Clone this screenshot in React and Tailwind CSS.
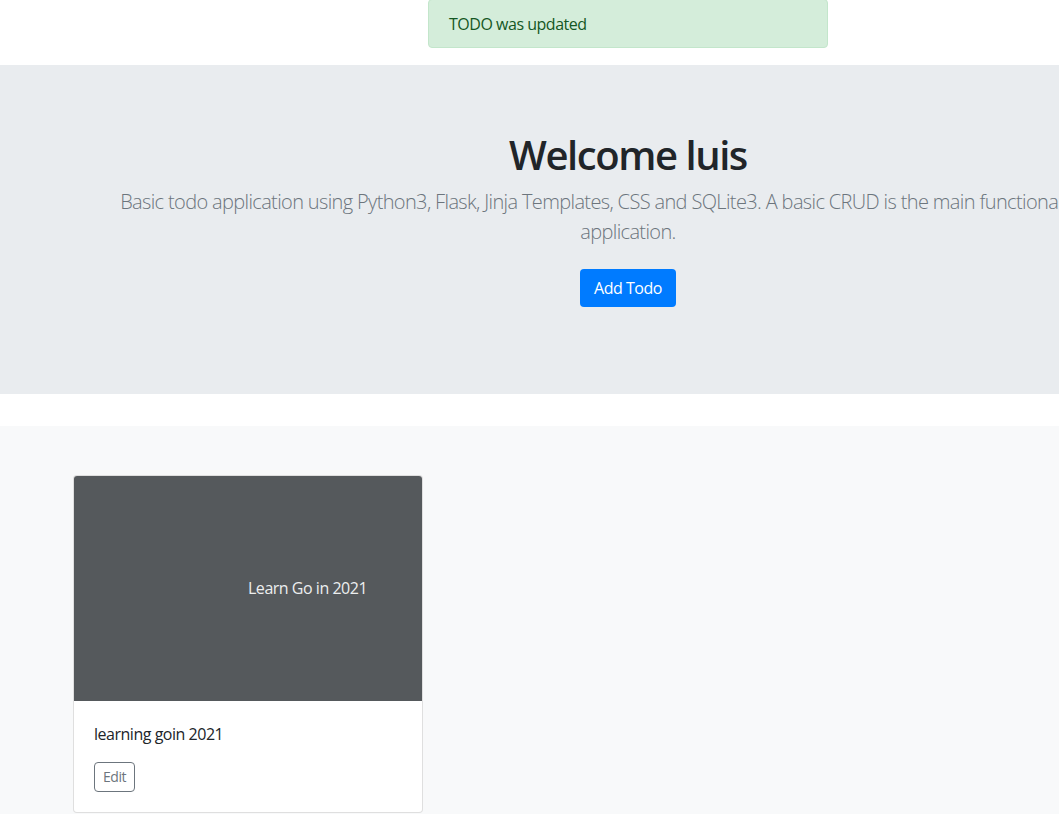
export default function App() {
  const font = { fontFamily: '"Open Sans", "Noto Sans", Arial, sans-serif' };
  return (
    <div className="w-full overflow-hidden bg-white" style={font}>
      <div className="w-[1256px] text-[#212529] leading-[1.5] tracking-[-0.03em]">
        <div className="flex justify-center">
          <div className="-mt-px w-[400px] h-[49px] rounded border border-[#c3e6cb] bg-[#d4edda] px-5 pt-[12px] text-base text-[#155724]">
            TODO was updated
          </div>
        </div>
        <div className="mt-[17px] bg-[#e9ecef] px-8 pt-[66px] h-[329px]">
          <div className="mx-auto w-[1140px] px-[15px] text-center">
            <h1 className="text-[40px] leading-[1.2] font-semibold mb-2 tracking-[-0.036em]">Welcome luis</h1>
            <p className="text-[20px] font-light text-[#6c757d] leading-[30px] tracking-[-0.032em] whitespace-nowrap">
              Basic todo application using Python3, Flask, Jinja Templates, CSS and SQLite3. A basic CRUD is the main functionality of this
              <br />
              application.
            </p>
            <div className="mt-[22px] flex justify-center">
              <button className="h-[38px] rounded bg-[#007bff] px-[14px] text-base text-white">Add Todo</button>
            </div>
          </div>
        </div>
        <div className="mt-8 bg-[#f8f9fa] pt-[49px] pb-12">
          <div className="mx-auto w-[1140px] px-[15px]">
            <div className="grid grid-cols-3">
              <div className="w-[350px]">
                <div className="overflow-hidden rounded border border-[rgba(0,0,0,0.125)] bg-white">
                  <div className="relative h-[225px] bg-[#55595c]">
                    <span className="absolute left-[174px] top-[100px] text-base text-[#eceeef]">Learn Go in 2021</span>
                  </div>
                  <div className="px-5 pt-[21px] pb-5">
                    <p className="mb-4 text-base">learning goin 2021</p>
                    <button className="h-[30px] rounded border border-[#6c757d] px-2 text-sm text-[#6c757d]">Edit</button>
                  </div>
                </div>
              </div>
            </div>
          </div>
        </div>
      </div>
    </div>
  );
}
